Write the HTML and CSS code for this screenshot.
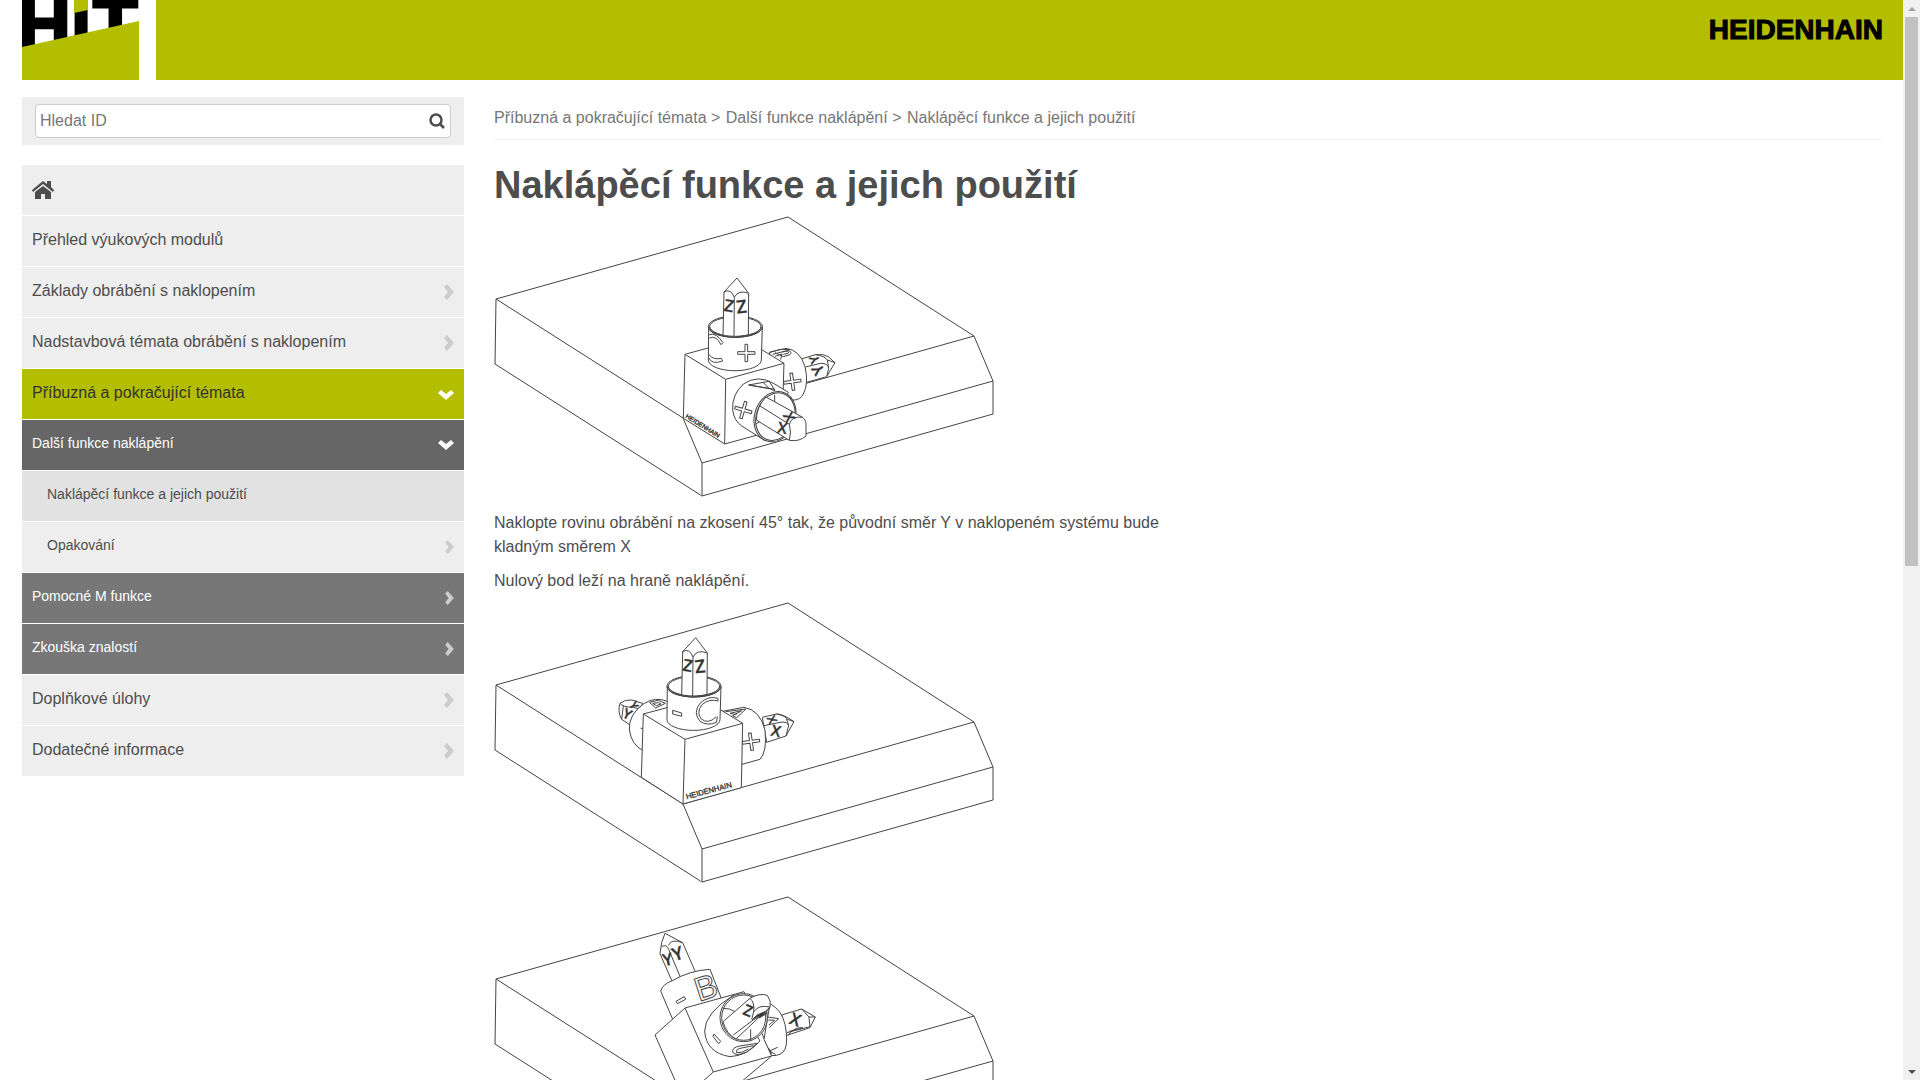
FILE: index.html
```
<!DOCTYPE html>
<html lang="cs">
<head>
    <meta charset="UTF-8">
    <meta name="viewport" content="width=device-width, initial-scale=1.0">
    <title>Naklápěcí funkce a jejich použití</title>
    <link rel="stylesheet" href="styles.css">
</head>
<body>
    <!-- Shared icons and drawing parts -->
    <svg class="defs" aria-hidden="true">
        <symbol id="right" viewBox="0 0 10 16"><path d="M0 3l3-3 7 8-7 8-3-3 4-5z"/></symbol>
        <symbol id="down" viewBox="0 0 16 10"><path d="M0 3l3-3 5 4 5-4 3 3-8 7z"/></symbol>
        <symbol id="slab" viewBox="0 0 500 284">
            <path d="M294 1L2 83L1 148L208 280L499 198L499 165L480 120Z"/>
            <path d="M2 83L189 202L208 247V280M208 247L499 165M189 202L480 120"/>
        </symbol>
        <symbol id="prism" viewBox="0 0 170 280" overflow="visible">
            <path d="M2 151A79 32 0 0 1 163 151L160 248A79 32 0 0 1 1 248Z"/>
            <ellipse cx="82" cy="148" rx="81" ry="32"/>
            <ellipse cx="82" cy="148" rx="77" ry="29"/>
            <path d="M45 176L48 44L87 2L122 48L121 173L78 180Z"/>
            <path d="M78 178L79 60M48 44Q68 32 79 60Q91 36 122 48"/>
            <path class="bare" d="M5 148A77 29 0 0 0 159 148M1 148A81 32 0 0 0 163 148"/>
            <text class="letter" y="18" font-size="50" transform="translate(63 85) rotate(10)">Z</text>
            <text class="letter" y="20" font-size="54" transform="translate(100 87) rotate(-6)">Z</text>
        </symbol>
        <path id="plus" d="M-4-26h8v22h22v8H4v22h-8V4h-22v-8h22z"/>
    </svg>

    <div class="page">
        <header>
            <a class="logo" href="#" aria-label="HIT">
                <svg viewBox="0 0 117 80">
                    <path fill="#fff" d="M0 0h117v80H0z"/>
                    <g class="logo-text">
                        <text x="-4" y="49">H</text>
                        <text x="49" y="49">i</text>
                        <text x="71" y="49">T</text>
                    </g>
                    <path d="M52 0h14v10l-14 3zM0 47L117 21V80H0z"/>
                </svg>
            </a>
            <div class="banner"><span class="brand">HEIDENHAIN</span></div>
        </header>

        <div class="columns">
            <aside>
                <form class="search">
                    <div class="search-box">
                        <input type="text" placeholder="Hledat ID" aria-label="Hledat ID">
                        <button type="button" aria-label="Hledat">
                            <svg viewBox="0 0 16 16"><circle cx="7" cy="7" r="5.5"/><path d="M11 11l4 4"/></svg>
                        </button>
                    </div>
                </form>

                <nav class="menu">
                    <a href="#" aria-label="Domů">
                        <svg class="home" viewBox="0 0 22 18">
                            <path d="M11 0l4 3V0h4v6l3 3-1 2L11 3 1 11 0 9z"/>
                            <path d="M11 5l8 6v7h-6v-5H9v5H3v-7z"/>
                        </svg>
                    </a>
                    <a href="#">Přehled výukových modulů</a>
                    <a href="#">Základy obrábění s naklopením<svg class="right"><use href="#right"/></svg></a>
                    <a href="#">Nadstavbová témata obrábění s naklopením<svg class="right"><use href="#right"/></svg></a>
                    <a href="#" class="active">Příbuzná a pokračující témata<svg class="down"><use href="#down"/></svg></a>
                    <a href="#" class="level2 open">Další funkce naklápění<svg class="down"><use href="#down"/></svg></a>
                    <a href="#" class="level3 current">Naklápěcí funkce a jejich použití</a>
                    <a href="#" class="level3">Opakování<svg class="right"><use href="#right"/></svg></a>
                    <a href="#" class="level2">Pomocné M funkce<svg class="right"><use href="#right"/></svg></a>
                    <a href="#" class="level2">Zkouška znalostí<svg class="right"><use href="#right"/></svg></a>
                    <a href="#">Doplňkové úlohy<svg class="right"><use href="#right"/></svg></a>
                    <a href="#">Dodatečné informace<svg class="right"><use href="#right"/></svg></a>
                </nav>
            </aside>

            <main>
                <div class="breadcrumb">
                    <a href="#">Příbuzná a pokračující témata</a>
                    <span>&gt;</span>
                    <a href="#">Další funkce naklápění</a>
                    <span>&gt;</span>
                    <a href="#">Naklápěcí funkce a jejich použití</a>
                </div>
                <h1>Naklápěcí funkce a jejich použití</h1>

                <svg class="drawing" viewBox="0 1 500 284">
                    <use href="#slab" width="500" height="284"/>
                    <g transform="translate(166 44) scale(.3333)" stroke-width="3">
                        <!-- Y axis -->
                        <path d="M424 297L466 284Q490 281 505 290L525 308L500 350L440 367Z"/>
                        <path d="M436 321L482 310Q505 310 506 325L500 350M466 284Q495 288 502 300L525 308M502 300L506 325"/>
                        <text class="letter" y="13" font-size="38" transform="translate(464 298) rotate(-112)">Y</text>
                        <text class="letter" y="16" font-size="46" transform="translate(474 329) rotate(-122)">Y</text>
                        <path d="M328 277L378 265Q420 270 435 320Q447 370 430 402Q420 420 402 420L372 425Z"/>
                        <path class="bare" d="M330 277Q360 264 390 269M338 283L385 271Q398 276 390 284L370 290L345 278M345 289L366 282L362 299M366 276Q392 270 384 280L370 283"/>
                        <use href="#plus" transform="translate(397 365) rotate(-8)"/>
                        <path d="M75 283L250 235L372 310L366 505L194 552L70 475Z"/>
                        <path d="M75 283L197 358L372 310M197 358L194 552"/>
                        <use href="#prism" x="144" y="52" width="170" height="280"/>
                        <path class="bare" d="M148 224Q168 216 189 248L183 254Q169 225 148 234M146 283Q160 301 184 295L188 303Q155 315 146 293"/>
                        <use href="#plus" x="259" y="279"/>
                        <!-- X axis -->
                        <path d="M385 397L342 371Q295 342 250 372Q215 405 218 450Q222 482 245 498L315 542Z"/>
                        <path class="bare" d="M266 375L328 364L345 392L328 386L266 375L345 388M310 368L328 386"/>
                        <ellipse cx="345" cy="470" rx="61" ry="77" transform="rotate(20 345 470)"/>
                        <ellipse cx="346" cy="470" rx="57" ry="73" transform="rotate(20 346 470)"/>
                        <path class="bare" d="M286 493L299 485L290 480M344 405V432"/>
                        <path d="M318 411L428 472Q440 482 438 500V528Q418 546 388 541L289 480Q290 440 318 411Z"/>
                        <path class="bare" d="M300 438L388 493Q395 515 388 541M388 493Q395 467 428 472"/>
                        <use href="#plus" transform="translate(250 450) rotate(16)"/>
                        <text class="letter" y="17" font-size="46" transform="translate(367 503) rotate(10)">X</text>
                        <text class="letter" y="15" font-size="42" transform="translate(388 471) rotate(62)">X</text>
                        <text class="maker" x="75" y="472" font-size="19" transform="rotate(32 75 472)">HEIDENHAIN</text>
                    </g>
                </svg>

                <p>Naklopte rovinu obrábění na zkosení 45° tak, že původní směr Y v naklopeném systému bude kladným směrem X</p>
                <p>Nulový bod leží na hraně naklápění.</p>

                <svg class="drawing" viewBox="0 1 500 284">
                    <use href="#slab" width="500" height="284"/>
                    <g transform="translate(106 18) scale(.3333)" stroke-width="3">
                        <path d="M60 250Q75 238 95 240L128 250L90 315L65 298Q52 275 60 250Z"/>
                        <path class="bare" d="M60 250Q68 262 100 262L118 267M65 298L70 258"/>
                        <text class="letter" y="15" font-size="42" transform="translate(82 282) rotate(25)">Y</text>
                        <text class="letter" y="12" font-size="34" transform="translate(102 256) rotate(60)">Y</text>
                        <path d="M205 245Q165 228 130 252Q85 285 88 330Q95 375 128 391L210 370Z"/>
                        <path class="bare" d="M148 247L175 241L196 250L167 264ZM158 250L176 248L183 252L169 257ZM122 325H131"/>
                        <!-- Right hand axis -->
                        <path d="M487 292L530 282Q550 282 582 305L558 348L500 367Z"/>
                        <path class="bare" d="M492 317L540 307Q562 303 566 317L558 348M530 282Q558 288 560 297L582 305M560 297L566 317"/>
                        <text class="letter" y="13" font-size="36" transform="translate(516 299) rotate(65)">X</text>
                        <text class="letter" y="16" font-size="46" transform="translate(528 333) rotate(12)">X</text>
                        <path d="M362 275L432 262Q480 270 495 330Q502 395 480 418L426 433Z"/>
                        <path class="bare" d="M377 275L438 267L410 293L398 287L425 272L390 280L410 284"/>
                        <use href="#plus" transform="translate(453 365) rotate(-8)"/>
                        <path d="M130 282L305 235L428 310L424 503L249 552L124 472Z"/>
                        <path d="M130 282L255 358L428 310M255 358L249 552"/>
                        <use href="#prism" x="200" y="51" width="170" height="280"/>
                        <path d="M218 271L245 279V289L218 282Z"/>
                        <path class="bare" d="M354 235Q325 226 300 250Q278 278 300 304Q322 319 350 307L352 289M354 235V243Q328 235 306 254Q288 278 304 297Q324 314 348 291"/>
                        <text class="maker" x="260" y="538" font-size="23" transform="rotate(-15 260 538)">HEIDENHAIN</text>
                    </g>
                </svg>

                <svg class="drawing" viewBox="0 1 500 284">
                    <use href="#slab" width="500" height="284"/>
                    <g transform="translate(136 15) scale(.3333)" stroke-width="3">
                        <path d="M90 128L95 95L105 67L158 95L198 187L128 215Z"/>
                        <path d="M95 107Q110 98 116 115L153 203M116 103Q122 82 158 95"/>
                        <text class="letter" y="18" font-size="50" transform="translate(113 145) rotate(-12)">Y</text>
                        <text class="letter" y="19" font-size="54" transform="translate(143 128) rotate(-18)">Y</text>
                        <path d="M92 240Q98 220 125 210Q180 178 240 175L278 272L165 330L128 325Z"/>
                        <path d="M138 271L163 257L167 265L142 278Z"/>
                        <text class="hollow" x="194" y="265" font-size="100" transform="rotate(-18 222 230)">B</text>
                        <path d="M455 312L515 294L556 318L540 350L465 375Z"/>
                        <path class="bare" d="M470 365L540 347L537 318L515 294M537 318L556 318M475 370Q500 345 519 351L478 361"/>
                        <text class="letter" y="18" font-size="50" transform="translate(496 325) rotate(20)">X</text>
                        <!-- Cube, tipped forward -->
                        <path d="M165 291L342 242L425 435L330 516L160 564L75 372Z"/>
                        <path d="M165 291L250 483L425 435M250 483L160 564"/>
                        <path d="M420 278Q455 297 465 340Q475 390 465 415Q455 435 425 434L402 385Z"/>
                        <path class="bare" d="M412 318L446 323L418 350M415 327L434 328L417 342M416 411L425 428M443 409L419 420L437 431"/>
                        <path d="M310 253Q225 305 224 360Q228 425 300 437Q350 435 390 390Z"/>
                        <path class="bare" d="M252 369L272 391L266 398L249 376ZM382 397L330 405Q305 409 308 424Q320 437 350 424L382 397M371 404L335 411Q315 415 320 425Q335 428 355 414"/>
                        <ellipse cx="341" cy="320" rx="71" ry="72"/>
                        <ellipse cx="341" cy="320" rx="66" ry="68"/>
                        <path class="bare" d="M278 292Q300 291 315 302M362 355V391"/>
                        <path d="M279 332L360 262Q388 245 412 253Q425 270 420 288L318 384Q290 370 279 332Z"/>
                        <path class="bare" d="M360 262Q375 275 371 303L365 325M371 303Q385 280 420 288Q418 303 371 326M310 372L371 326"/>
                        <path fill="#333" d="M367 326L380 313L404 302L398 312L412 306L388 321L386 314Z"/>
                        <text class="letter" y="16" font-size="46" transform="translate(354 299) rotate(22)">Z</text>
                    </g>
                </svg>
            </main>
        </div>
    </div>

    <div class="scrollbar" aria-hidden="true">
        <svg viewBox="0 0 17 17"><path fill="#a3a3a3" d="M5 11l4-4 4 4z"/></svg>
        <div class="track"><div class="thumb"></div></div>
        <svg viewBox="0 0 17 17"><path fill="#505050" d="M5 7l4 4 4-4z"/></svg>
    </div>
</body>
</html>
```
FILE: styles.css
```
:root {
    --green: #b4be00;
    --text: #4d4d4d;
    --panel: #eee;
}

* {
    box-sizing: border-box;
}

body {
    margin: 0;
    height: 100vh;
    display: flex;
    overflow: hidden;
    font-family: Arial, "Liberation Sans", sans-serif;
    font-size: 16px;
    line-height: 24px;
    color: var(--text);
}

a {
    color: inherit;
    text-decoration: none;
}

.defs {
    position: absolute;
    width: 0;
    height: 0;
}

.page {
    flex: 1;
    overflow: hidden;
}

header {
    display: flex;
    gap: 17px;
    height: 80px;
    padding-left: 22px;
}

.logo {
    width: 117px;
}

.logo svg {
    display: block;
    fill: var(--green);
}

.logo-text {
    font-size: 73px;
    font-weight: bold;
    fill: #000;
    stroke: #000;
    stroke-width: 3;
}

.banner {
    flex: 1;
    display: flex;
    justify-content: flex-end;
    padding: 18px 20px;
    background-color: var(--green);
}

.brand {
    font-size: 28px;
    font-weight: bold;
    color: #000;
    -webkit-text-stroke: 1px #000;
}

.columns {
    display: grid;
    grid-template-columns: 442px 1fr;
    gap: 30px;
    padding: 17px 21px 0 22px;
}

/* Sidebar */
.search {
    padding: 7px 13px;
    margin-bottom: 20px;
    background-color: var(--panel);
}

.search-box {
    display: flex;
    height: 34px;
    border: 1px solid #ccc;
    border-radius: 4px;
    background-color: white;
}

.search input {
    flex: 1;
    padding: 0 4px;
    border: none;
    background: none;
    font: inherit;
    outline: none;
}

.search input::placeholder {
    color: #777;
}

.search button {
    width: 25px;
    padding: 0 4px;
    border: none;
    background: none;
}

.search button svg {
    display: block;
    width: 16px;
    fill: none;
    stroke: var(--text);
    stroke-width: 2.5;
}

.menu {
    display: flex;
    flex-direction: column;
    gap: 1px;
}

.menu a {
    display: flex;
    align-items: center;
    justify-content: space-between;
    height: 50px;
    padding: 0 10px 2px;
    background-color: var(--panel);
}

.menu svg {
    fill: #ccc;
    position: relative;
    top: 1px;
}

.menu .home {
    width: 22px;
    height: 18px;
    fill: var(--text);
}

.right {
    width: 10px;
    height: 16px;
}

.menu .down {
    top: 2px;
    width: 16px;
    height: 10px;
    fill: white;
}

.menu .active {
    background-color: var(--green);
    color: #333;
}

.menu .level2,
.menu .level3 {
    padding-bottom: 4px;
    font-size: 14px;
}

.menu .level2 {
    background-color: #777;
    color: white;
}

.menu .open {
    background-color: #666;
}

.menu .level3 {
    padding-left: 25px;
}

.menu .current {
    background-color: #e2e2e2;
}

.level2 .right,
.level3 .right {
    width: 9px;
    height: 14px;
}

.menu .level2 svg,
.menu .level3 svg {
    top: 2px;
}

/* Content */
.breadcrumb {
    padding: 9px 0;
    border-bottom: 1px solid var(--panel);
    border-radius: 4px;
    color: #777;
}

.breadcrumb span {
    margin-right: 1px;
}

h1 {
    margin: 23px 0 10px;
    font-size: 38px;
    line-height: 44px;
}

p {
    max-width: 50%;
    margin: 0 0 10px;
}

.drawing {
    display: block;
    width: 500px;
    height: 284px;
    margin-bottom: 10px;
    overflow: visible;
    fill: white;
    stroke: #444;
    stroke-width: 1;
    stroke-linejoin: round;
}

.bare {
    fill: none;
}

.letter,
.maker {
    fill: #333;
    stroke: #333;
    stroke-width: 1;
}

.letter {
    font-family: "Open Sans", sans-serif;
    font-weight: 600;
    text-anchor: middle;
}

.hollow {
    fill: white;
}

/* Scrollbar */
.scrollbar {
    display: flex;
    flex-direction: column;
    width: 17px;
    background-color: #f1f1f1;
}

.track {
    flex: 1;
    padding: 0 2px;
}

.thumb {
    height: 52.5%;
    background-color: #c1c1c1;
}
```
